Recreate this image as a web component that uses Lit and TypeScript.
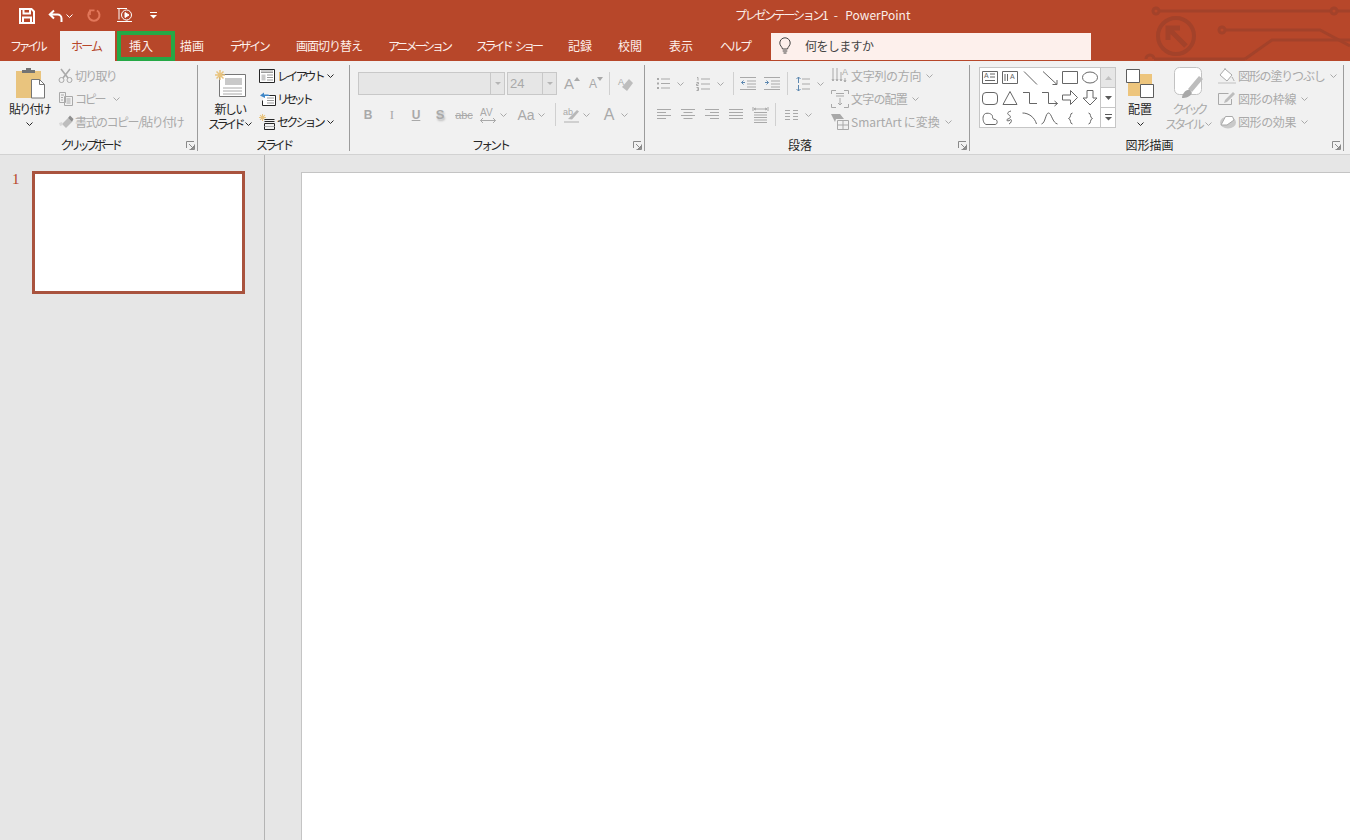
import { css, html, svg, LitElement } from "lit";
import { customElement } from "lit/decorators.js";

const icon = (w: number, h: number, body: unknown) =>
  html`<svg width=${w} height=${h} viewBox="0 0 ${w} ${h}">${body}</svg>`;

// letter-spacing squeezes the full-width kana to the narrow Meiryo UI widths
const tx = (text: string, ls = 0) =>
  html`<span class="tx" style="letter-spacing:${ls}px">${text}</span>`;

const chev = icon(7, 4, svg`<path d="M.5.5l3 3 3-3"/>`);
const launcher = html`<span class="launch">${icon(9, 9, svg`
  <path d="M.5 7V.5H8M8.5 3.500v5H3.500M3 3l4.500 4.500M7.500 5v2.500H5"/>`)}</span>`;
const sep = html`<i class="sep"></i>`;

const TABS: [string, number, number][] = [
  ["描画", 24, 0],
  ["デザイン", 40, -2.4],
  ["画面切り替え", 66, -1],
  ["アニメーション", 62, -3.1],
  ["スライド ショー", 66, -3.4],
  ["記録", 24, 0],
  ["校閲", 25, 0],
  ["表示", 25, 0],
  ["ヘルプ", 30, -2],
];

const I = {
  save: icon(16, 16, svg`<g stroke-width="2"><path d="M1 1h11.500L15 3.500V15H1z"/><path d="M4.500 1v4.500h6.500V1M4 15V9.500h8V15"/></g>`),
  undo: icon(15, 14, svg`<g stroke-width="2"><path d="M6 1.500L1.800 5.500 6 9.500M2 5.500h7.500a4 4 0 0 1 4 4V13"/></g>`),
  redo: icon(14, 15, svg`<g stroke-width="2"><path d="M10 2.500a5.600 5.600 0 1 1-6.500.2"/><path d="M3 7V2.400H7.500" stroke-width="1.600"/></g>`),
  show: icon(17, 17, svg`<path d="M1 1.500h10M3 1.500v11M1 14.500h15M10 14.500l1-1"/><circle cx="10.500" cy="8" r="5"/><path d="M9 5.500l4 2.500-4 2.500z" fill="currentColor"/>`),
  more: icon(7, 7, svg`<path d="M0 .5h7"/><path d="M0 3h7L3.500 6.500z" fill="currentColor" stroke="none"/>`),
  bulb: icon(12, 16, svg`<path d="M3.500 11C3 8.500.8 7.800.8 5a5.200 5.200 0 0 1 10.400 0c0 2.800-2.200 3.500-2.700 6zM3.700 13h4.600M4.500 15h3"/>`),
  paste: icon(30, 31, svg`
    <path d="M1 3h25v27H1z" fill="#e9c47e" stroke="none"/>
    <path d="M7 4V2h4V0h5v2h4v3H7z" fill="#737373" stroke="none"/>
    <path d="M16.500 11.500h8l5 5v13.500h-13z" fill="#fff" stroke="#757575"/>
    <path d="M24.500 11.500v5h5" stroke="#757575"/>`),
  cut: icon(16, 16, svg`<circle cx="3.500" cy="12" r="2.500"/><circle cx="11.500" cy="12" r="2.500"/><path d="M3 1l7 9M12 1L5 10" stroke-width="1.600"/>`),
  copy: icon(16, 15, svg`<path d="M1.500 1.500h6v10h-6zM6.500 5.500h8v9h-8zM3 4h3M3 6.500h2M3 9h2M8.500 8h4M8.500 10h4M8.500 12h4"/>`),
  brush: icon(17, 14, svg`<path d="M4 9l6-6 4 4-6 6z" fill="#bdbdbd" stroke="none"/><path d="M10 3l2-2.500 3.500 3.500L14 7z" fill="#8f8f8f" stroke="none"/><path d="M1 8l3-1 1 3-3 1z" fill="#d9d9d9" stroke="none"/>`),
  layout: icon(16, 14, svg`<path d="M.5.5h15v13H.5z" fill="#fff"/><path d="M2 2h12M2 3.500h12" stroke="#9a9a9a"/><path d="M2.500 5.500h4v6h-4z" fill="#c9c9c9" stroke="none"/><path d="M8 6h6M8 8.500h6M8 11h6" stroke="#9a9a9a"/>`),
  reset: icon(17, 14, svg`<path d="M5.500 3.500h11v10h-13v-5" fill="#fff"/><path d="M8 6h7M8 8.500h7M8 11h7" stroke="#9a9a9a"/><path d="M1 3.500L5 .5v2h4a3 3 0 0 1 2 1.500H6v2z" fill="#3f87c8" stroke="none"/>`),
  section: icon(16, 16, svg`<g transform="scale(.7)">${svg`<path d="M5 0v10M0 5h10M1.500 1.500l7 7M8.500 1.500l-7 7" stroke="#e9c47e" stroke-width="1.500"/>`}</g><path d="M5.500 5.500h10M5.500 7.500h10M5.500 9.500h10v6h-10z" fill="none"/><path d="M5.500 12.500h10" stroke="#b0b0b0"/>`),
  newSlide: icon(31, 27, svg`
    <path d="M4.500 4.500h26v22h-26z" fill="#fff" stroke="#777"/>
    <path d="M10 8h17v7H10z" fill="#c9c9c9" stroke="none"/>
    <path d="M8 18h19M8 21h19M8 24h19" stroke="#a8a8a8"/>
    <path d="M5 0v10M0 5h10M1.500 1.500l7 7M8.500 1.500l-7 7" stroke="#e9c47e" stroke-width="1.500"/>`),
  grow: html`<span class="g up-a">A</span>${icon(6, 4, svg`<path d="M0 4l3-4 3 4z" fill="currentColor" stroke="none"/>`)}`,
  shrink: html`<span class="g down-a">A</span>${icon(6, 4, svg`<path d="M0 0h6L3 4z" fill="currentColor" stroke="none"/>`)}`,
  eraser: icon(16, 16, svg`<text x="0" y="9" class="glyph" font-size="9">A</text><path d="M4 11l7-8 4 4-6 8z" fill="#bdbdbd" stroke="none"/>`),
  b: html`<b class="g" >B</b>`,
  i: html`<i class="g serif">I</i>`,
  u: html`<b class="g under">U</b>`,
  s: html`<b class="g shadow">S</b>`,
  abc: html`<span class="g strike">abc</span>`,
  av: icon(16, 16, svg`<text x="0" y="9" class="glyph" font-size="10">AV</text><path d="M.5 13.500h15M3 11l-2.500 2.500L3 16M13 11l2.500 2.500L13 16"/>`),
  aa: html`<span class="g big">Aa</span>`,
  hl: icon(17, 16, svg`<text x="0" y="8" class="glyph" font-size="9">ab</text><path d="M5 12L14 3l2 1.500-7 8z" fill="#b8b8b8" stroke="none"/><path d="M1 15h15" stroke="#d0d0d0" stroke-width="2"/>`),
  color: html`<span class="g huge">A</span>`,
  bullets: icon(13, 13, svg`<path d="M4 2h9M4 6.500h9M4 11h9"/><path d="M0 1h2v2H0zM0 5.500h2v2H0zM0 10h2v2H0z" fill="currentColor" stroke="none"/>`),
  numbers: icon(14, 14, svg`<path d="M5 2h9M5 7h9M5 12h9"/><path d="M1 .5h1v3M.5 5.500h2v1.500h-2v1.500h2M.5 10.500h2v3h-2M1 12h1.500"/>`),
  outdent: icon(16, 13, svg`<path d="M0 .5h16M7 4h9M7 7h9M7 10h9M0 12.500h16"/><path d="M5 5.500H1.500M3.500 3.500l-2 2 2 2" stroke="#5d88b0"/>`),
  indent: icon(16, 13, svg`<path d="M0 .5h16M7 4h9M7 7h9M7 10h9M0 12.500h16"/><path d="M1 5.500h3.500M2.500 3.500l2 2-2 2" stroke="#5d88b0"/>`),
  spacing: icon(14, 16, svg`<path d="M6 3h8M6 8h8M6 13h8"/><path d="M2.500 1v6M.5 3l2-2 2 2M2.500 9v6M.5 13l2 2 2-2" stroke="#5d88b0"/>`),
  left: icon(14, 11, svg`<path d="M0 .5h14M0 3.500h9M0 6.500h14M0 9.500h9"/>`),
  center: icon(14, 11, svg`<path d="M0 .5h14M2.500 3.500h9M0 6.500h14M2.500 9.500h9"/>`),
  right: icon(14, 11, svg`<path d="M0 .5h14M5 3.500h9M0 6.500h14M5 9.500h9"/>`),
  justify: icon(14, 11, svg`<path d="M0 .5h14M0 3.500h14M0 6.500h14M0 9.500h14"/>`),
  distrib: icon(15, 16, svg`<path d="M0 0v4M15 0v4M1 2h13M3 1L1 2l2 1M12 1l2 1-2 1M1 5.500h13M1 8h13M1 10.500h13M1 13h13M1 15.500h13" stroke-width="1"/>`),
  cols: icon(13, 10, svg`<path d="M0 .5h5M8 .5h5M0 3.500h5M8 3.500h5M0 6.500h5M8 6.500h5M0 9.500h5M8 9.500h5"/>`),
  direction: icon(18, 18, svg`<path d="M2 1v13M6 1v13M10 5v9M1 12l1 2 1-2M5 12l1 2 1-2M9 12l1 2 1-2"/><text x="11" y="8" class="glyph" font-size="9">A</text><path d="M14 11v4M13 13l1 2 1-2"/>`),
  align: icon(18, 18, svg`<path d="M.5 4V.5H5M13 .5h4.500V4M.5 14v3.500H5M13 17.500h4.500V14" /><path d="M5 3.500h8M5 6h8M9 8v7M7 13l2 2 2-2"/>`),
  smart: icon(19, 18, svg`<path d="M0 1h9l4 5H5l-1 3z" fill="#a8a8a8" stroke="none"/><path d="M6.500 7.500h11v9h-11zM12 8v8M7 12h10"/>`),
  arrange: icon(28, 29, svg`
    <path d="M11 5h15v14H11zM2 13h15v14H2z" fill="#edc57d" stroke="none"/>
    <path d="M.5.500h13v13H.5zM14.500 15.500h13v13h-13z" fill="#fff" stroke="#5c5c5c"/>`),
  quick: icon(30, 32, svg`
    <rect x=".5" y=".5" width="27" height="27" rx="5" fill="#fff" stroke="#c2c2c2"/>
    <path d="M14 22L25 9l4 3-11 13z" fill="#bdbdbd" stroke="none"/>
    <path d="M8 31c0-4 4-9 8-8l2 3c-2 4-6 5-10 5z" fill="#a8a8a8" stroke="none"/>`),
  fill: icon(18, 16, svg`<path d="M7 1l7 6-5 6-7-6z" fill="#fff"/><path d="M7 1V0M14 9c1 2 2 3 2 4" /><path d="M0 15h18" stroke="#d9d9d9" stroke-width="2"/>`),
  outline: icon(18, 16, svg`<path d="M.5 2.500h10M.5 2.500v11h13V8"/><path d="M7 9l8-8 2 2-8 8-3 1z" fill="#bdbdbd" stroke="none"/>`),
  effect: icon(18, 15, svg`<ellipse cx="10" cy="8.500" rx="8" ry="6" fill="#c9c9c9" stroke="none"/><path d="M3 11L7.500 2.500h7L16 6 9 11z" fill="#fff"/>`),
};

const SHAPES = [
  svg`<path d="M2.500 3.500h15v12h-15z"/><text x="4" y="10" class="glyph" font-size="7">A</text><path d="M10 6h5M10 9h5M5 12.500h10"/>`,
  svg`<path d="M2.500 3.500h15v12h-15zM5 6v7M7.500 6v7"/><text x="10" y="11" class="glyph" font-size="7">A</text>`,
  svg`<path d="M4 3.500l13 13"/>`,
  svg`<path d="M3 3.500l14 13M17 12v4.500h-4.500"/>`,
  svg`<path d="M2.500 3.500h15v12h-15z"/>`,
  svg`<ellipse cx="10" cy="9.500" rx="7.500" ry="5.500"/>`,
  svg`<rect x="2.500" y="4.500" width="15" height="12" rx="3.500"/>`,
  svg`<path d="M10 3.500l7 13H3z"/>`,
  svg`<path d="M3 4.500h6.500v11H17"/>`,
  svg`<path d="M2 4.500h6.500v11h9M14.500 13l3 2.500-3 2.500"/>`,
  svg`<path d="M2.500 7h8V2.500l7 7-7 7V12h-8z"/>`,
  svg`<path d="M7 2.500h6V10h4l-7 7-7-7h4z"/>`,
  svg`<path d="M6 16.500H15c2.500 0 3-4 .5-5-2.500 0-3-1-3-3s-3-4-7-3c-2 1-2.500 3-2.500 5s1 6 3.500 6z"/>`,
  svg`<path d="M11 3c-4 1-4 3-2 4s2 3-1 4 0 3 2 1 2 3-1 4"/>`,
  svg`<path d="M2.500 5c6 0 12 4 14 11"/>`,
  svg`<path d="M1.500 16c4-1 4-11 7-11s4 10 9 11"/>`,
  svg`<path d="M12.500 5c-3 0-1 5-4 5.500 3 .5 1 5.500 4 5.500"/>`,
  svg`<path d="M8.500 5c3 0 1 5 4 5.500-3 .5-1 5.500-4 5.500"/>`,
];

@customElement("app-root")
export class AppRoot extends LitElement {
  static override styles = css`
    :host {
      display: flex;
      flex-direction: column;
      position: relative;
      height: 840px;
      overflow: hidden;
      font: 12px/14px "Noto Sans CJK JP", "Liberation Sans", sans-serif;
      color: #262626;
      background: #e6e6e6;
    }
    svg {
      display: block;
      flex: none;
      fill: none;
      stroke: currentColor;
      stroke-width: 1;
      overflow: visible;
    }
    .glyph {
      fill: currentColor;
      stroke: none;
      font-family: "Liberation Sans", sans-serif;
    }
    .tx {
      white-space: nowrap;
    }

    .title {
      flex: none;
      height: 31px;
      background: #b7472a;
      color: #fff;
      display: flex;
      align-items: center;
    }
    .qat {
      display: flex;
      align-items: center;
      width: 735px;
      height: 28px;
      padding-left: 19px;
      box-sizing: border-box;
    }
    .qat .undo { margin-left: 13px; }
    .qat .ch { margin: 0 0 0 3px; }
    .qat .redo { margin-left: 14px; color: #e2775a; }
    .qat .show { margin-left: 15px; }
    .qat .more { margin-left: 17px; }
    .doc-title {
      color: #fbeee9;
      padding-bottom: 2px;
      white-space: nowrap;
      word-spacing: 1px;
    }

    .circuit {
      position: absolute;
      top: 0;
      right: 0;
      overflow: hidden;
      stroke: #a3422a;
      stroke-width: 3;
    }

    .tabs {
      flex: none;
      height: 30px;
      background: #b7472a;
      color: #fdf0ec;
      display: flex;
      align-items: center;
    }
    .tab {
      height: 100%;
      box-sizing: border-box;
      display: flex;
      align-items: center;
    }
    .file { padding: 0 15px 0 10px; width: 60px; }
    .home {
      width: 55px;
      padding-left: 11px;
      background: #f1f1f1;
      color: #b7472a;
    }
    .insert {
      width: 58px;
      margin-left: 2px;
      padding-left: 8px;
      border: 4px solid #25a846;
    }
    .plain {
      display: flex;
      gap: 26px;
      margin-left: 5px;
    }
    .plain > span {
      display: block;
      white-space: nowrap;
      word-spacing: 5px;
    }
    .search {
      margin-left: 21px;
      width: 320px;
      height: 27px;
      background: #fdf0ec;
      color: #444;
      display: flex;
      align-items: center;
      gap: 14px;
      padding-left: 8px;
      box-sizing: border-box;
    }

    .ribbon {
      flex: none;
      height: 94px;
      box-sizing: border-box;
      padding-top: 4px;
      background: #f1f1f1;
      border-bottom: 1px solid #d2d2d2;
      display: flex;
    }
    .group {
      height: 86px;
      flex: none;
      box-sizing: border-box;
      border-right: 1px solid #9c9c9c;
      display: flex;
      flex-direction: column;
    }
    .g-clip { width: 198px; }
    .g-slide { width: 152px; }
    .g-font { width: 295px; }
    .g-para { width: 325px; }
    .g-draw { width: 374px; }
    .body {
      height: 72px;
      flex: none;
      display: flex;
    }
    .foot {
      height: 14px;
      flex: none;
      margin-top: 1px;
      display: flex;
      align-items: center;
    }
    .foot .name {
      flex: 1;
      text-align: center;
    }
    .launch {
      width: 14px;
      box-sizing: border-box;
      padding-left: 3px;
      color: #8a8a8a;
    }
    .g-clip .name {
      padding-right: 3px;
    }

    .off {
      color: #a9a9a9;
    }
    .col {
      display: flex;
      flex-direction: column;
      align-items: center;
    }
    .col .pic {
      height: 36px;
      display: flex;
      align-items: center;
      justify-content: center;
    }
    .col .line {
      height: 15px;
      display: flex;
      align-items: center;
      gap: 3px;
    }
    .rows {
      display: flex;
      flex-direction: column;
      margin-top: -1px;
    }
    .row {
      height: 23px;
      display: flex;
      align-items: center;
      gap: 2px;
    }
    .row .ch {
      margin-left: 3px;
    }
    .g-clip .row {
      gap: 0;
    }
    .g-clip .row .ch {
      margin-left: 9px;
    }
    .g-slide .row {
      gap: 1px;
    }
    .ico {
      width: 18px;
      display: flex;
      justify-content: center;
    }

    .paste { width: 57px; padding-left: 2px; box-sizing: border-box; }
    .new { width: 60px; padding-left: 4px; box-sizing: border-box; }

    .stack {
      padding-top: 7px;
      display: flex;
      flex-direction: column;
      gap: 8px;
    }
    .tools {
      height: 23px;
      display: flex;
      align-items: center;
      flex: none;
    }
    .b {
      width: 24px;
      height: 23px;
      display: flex;
      align-items: center;
      justify-content: center;
      flex: none;
    }
    .b .up-a, .b .down-a {
      line-height: 18px;
    }
    .b .up-a { font-size: 15px; }
    .b .down-a { font-size: 12px; }
    .b .up-a + svg, .b .down-a + svg {
      margin-bottom: 10px;
    }
    .c {
      width: 14px;
      flex: none;
    }
    .c.w {
      width: 16px;
      padding-left: 2px;
      box-sizing: border-box;
    }
    .sep {
      width: 1px;
      height: 23px;
      margin: 0 3px;
      background: #d0d0d0;
      flex: none;
    }
    .sep.tight {
      margin: 0 2px;
    }
    .sep.flush {
      margin: 0 4px 0 1px;
    }
    .f-top { margin-left: 8px; }
    .f-bot { margin-left: 6px; }
    .p-top { margin-left: 6px; }
    .p-bot { margin-left: 7px; }
    .select {
      height: 23px;
      box-sizing: border-box;
      background: #e6e6e6;
      border: 1px solid #c8c8c8;
      display: flex;
      justify-content: flex-end;
      flex: none;
    }
    .s-font { width: 147px; }
    .s-size {
      width: 50px;
      margin-left: 2px;
      margin-right: 3px;
      justify-content: space-between;
      padding-left: 2px;
      font: 13px/21px "Liberation Sans", sans-serif;
    }
    .drop {
      width: 13px;
      border-left: 1px solid #c8c8c8;
      display: flex;
      align-items: center;
      justify-content: center;
      color: #b5b5b5;
    }
    .drop::after {
      content: "";
      border: 3px solid transparent;
      border-top-color: currentColor;
      margin-top: 3px;
    }
    .g {
      font: 12px/16px "Liberation Sans", sans-serif;
    }
    b.g { font-weight: 700; }
    .serif { font-family: "Liberation Serif", serif; font-size: 13px; }
    .under { text-decoration: underline; }
    .shadow { font-size: 13px; text-shadow: 1px 2px 2px #bbb; }
    .strike { text-decoration: line-through; font-size: 11px; }
    .big { font-size: 14px; }
    .huge { font-size: 16px; }

    .p-left {
      flex: 0 0 186px;
    }

    .gallery {
      width: 137px;
      height: 61px;
      margin: 2px 0 0 9px;
      box-sizing: border-box;
      background: #fff;
      border: 1px solid #c6c6c6;
      display: flex;
      color: #666;
      flex: none;
    }
    .shapes {
      flex: 1;
      display: grid;
      grid-template-columns: repeat(6, 20px);
      grid-auto-rows: 20px;
    }
    .scroll {
      width: 14px;
      border-left: 1px solid #c6c6c6;
      display: flex;
      flex-direction: column;
    }
    .scroll span {
      flex: 1;
      display: flex;
      align-items: center;
      justify-content: center;
      color: #5a5a5a;
    }
    .scroll span + span {
      border-top: 1px solid #c6c6c6;
    }
    .scroll .up {
      background: #e6e6e6;
      color: #c0c0c0;
    }
    .arrange { width: 44px; margin-left: 2px; }
    .quick { width: 51px; margin-left: 1px; }
    .d-rows { margin-left: 4px; }

    .work {
      flex: 1;
      display: flex;
      min-height: 0;
    }
    .side {
      width: 265px;
      box-sizing: border-box;
      border-right: 1px solid #b4b4b4;
      padding: 16px 0 0 12px;
      display: flex;
      flex: none;
    }
    .num {
      width: 20px;
      color: #b7472a;
      font: 15px/16px "Liberation Serif", serif;
    }
    .thumb {
      width: 213px;
      height: 123px;
      box-sizing: border-box;
      background: #fff;
      border: 3px solid #a9533e;
    }
    .stage {
      flex: 1;
      padding: 17px 0 0 36px;
    }
    .slide {
      height: 100%;
      box-sizing: border-box;
      background: #fff;
      border: solid #c4c4c4;
      border-width: 1px 0 0 1px;
    }
  `;

  private _titleBar() {
    return html`
      <div class="title">
        <div class="qat">
          ${I.save}
          <span class="undo">${I.undo}</span>
          <span class="ch">${chev}</span>
          <span class="redo">${I.redo}</span>
          <span class="show">${I.show}</span>
          <span class="more">${I.more}</span>
        </div>
        <span class="doc-title">${tx("プレゼンテーション1", -2.3)}&nbsp; -&nbsp; PowerPoint</span>
      </div>
      <svg class="circuit" width="210" height="61" viewBox="0 0 210 61">
        <circle cx="16" cy="11" r="3"/><path d="M19 11H192M198 11H210"/><circle cx="194" cy="11" r="3"/>
        <circle cx="36" cy="36" r="18" stroke-width="4"/>
        <path d="M28 28L46 46M28 40V28H40" stroke-width="5"/>
        <circle cx="82" cy="30" r="3"/><path d="M85 30H180L210 46"/>
        <path d="M105 59L132 40H200L210 40"/>
        <path d="M6 59a4 4 0 0 1 8 0M14 59H105"/>
      </svg>
    `;
  }

  private _tabs() {
    return html`
      <div class="tabs">
        <div class="tab file">${tx("ファイル", -3.4)}</div>
        <div class="tab home">${tx("ホーム", -1.8)}</div>
        <div class="tab insert">挿入</div>
        <div class="plain">
          ${TABS.map(([t, w, ls]) => html`<span style="width:${w}px;letter-spacing:${ls}px">${t}</span>`)}
        </div>
        <div class="search">${I.bulb}${tx("何をしますか", -.6)}</div>
      </div>
    `;
  }

  private _clipboard() {
    return html`
      <div class="group g-clip">
        <div class="body">
          <div class="col paste">
            <div class="pic">${I.paste}</div>
            <div class="line">${tx("貼り付け", -1.7)}</div>
            <div class="line">${chev}</div>
          </div>
          <div class="rows off">
            <div class="row"><span class="ico">${I.cut}</span>${tx("切り取り", -1.75)}</div>
            <div class="row"><span class="ico">${I.copy}</span>${tx("コピー", -2.3)}<span class="ch">${chev}</span></div>
            <div class="row"><span class="ico">${I.brush}</span>${tx("書式のコピー/貼り付け", -1.5)}</div>
          </div>
        </div>
        <div class="foot"><span class="name">${tx("クリップボード", -3.6)}</span>${launcher}</div>
      </div>
    `;
  }

  private _slides() {
    return html`
      <div class="group g-slide">
        <div class="body">
          <div class="col new">
            <div class="pic">${I.newSlide}</div>
            <div class="line">${tx("新しい", -1.7)}</div>
            <div class="line">${tx("スライド", -3.5)}${chev}</div>
          </div>
          <div class="rows">
            <div class="row"><span class="ico">${I.layout}</span>${tx("レイアウト", -2.8)}<span class="ch">${chev}</span></div>
            <div class="row"><span class="ico">${I.reset}</span>${tx("リセット", -3.75)}</div>
            <div class="row"><span class="ico">${I.section}</span>${tx("セクション", -2.8)}<span class="ch">${chev}</span></div>
          </div>
        </div>
        <div class="foot"><span class="name">${tx("スライド", -3.2)}</span></div>
      </div>
    `;
  }

  private _font() {
    return html`
      <div class="group g-font">
        <div class="body">
          <div class="stack off">
            <div class="tools f-top">
              <div class="select s-font"><span class="drop"></span></div>
              <div class="select s-size"><span>24</span><span class="drop"></span></div>
              <span class="b">${I.grow}</span><span class="b">${I.shrink}</span>
              <i class="sep flush"></i>
              <span class="b">${I.eraser}</span>
            </div>
            <div class="tools f-bot">
              <span class="b">${I.b}</span><span class="b">${I.i}</span><span class="b">${I.u}</span>
              <span class="b">${I.s}</span><span class="b">${I.abc}</span>
              <span class="b">${I.av}</span><span class="c">${chev}</span>
              <span class="b">${I.aa}</span><span class="c">${chev}</span>
              ${sep}
              <span class="b">${I.hl}</span><span class="c">${chev}</span>
              <span class="b">${I.color}</span><span class="c">${chev}</span>
            </div>
          </div>
        </div>
        <div class="foot"><span class="name">${tx("フォント", -3)}</span>${launcher}</div>
      </div>
    `;
  }

  private _paragraph() {
    return html`
      <div class="group g-para">
        <div class="body off">
          <div class="stack p-left">
            <div class="tools p-top">
              <span class="b">${I.bullets}</span><span class="c w">${chev}</span>
              <span class="b">${I.numbers}</span><span class="c w">${chev}</span>
              <i class="sep tight"></i>
              <span class="b">${I.outdent}</span><span class="b">${I.indent}</span>
              ${sep}
              <span class="b">${I.spacing}</span><span class="c w">${chev}</span>
            </div>
            <div class="tools p-bot">
              <span class="b">${I.left}</span><span class="b">${I.center}</span><span class="b">${I.right}</span>
              <span class="b">${I.justify}</span><span class="b">${I.distrib}</span>
              ${sep}
              <span class="b">${I.cols}</span><span class="c w">${chev}</span>
            </div>
          </div>
          <div class="rows">
            <div class="row"><span class="ico">${I.direction}</span>${tx("文字列の方向", -.3)}<span class="ch">${chev}</span></div>
            <div class="row"><span class="ico">${I.align}</span>${tx("文字の配置", -.8)}<span class="ch">${chev}</span></div>
            <div class="row"><span class="ico">${I.smart}</span>SmartArt ${tx("に変換")}<span class="ch">${chev}</span></div>
          </div>
        </div>
        <div class="foot"><span class="name">段落</span>${launcher}</div>
      </div>
    `;
  }

  private _drawing() {
    return html`
      <div class="group g-draw">
        <div class="body">
          <div class="gallery">
            <div class="shapes">
              ${SHAPES.map((s) => icon(20, 20, s))}
            </div>
            <div class="scroll">
              <span class="up">${icon(7, 4, svg`<path d="M0 4h7L3.500 0z" fill="currentColor" stroke="none"/>`)}</span>
              <span>${icon(7, 4, svg`<path d="M0 0h7L3.500 4z" fill="currentColor" stroke="none"/>`)}</span>
              <span>${I.more}</span>
            </div>
          </div>
          <div class="col arrange">
            <div class="pic">${I.arrange}</div>
            <div class="line">${tx("配置")}</div>
            <div class="line">${chev}</div>
          </div>
          <div class="col quick off">
            <div class="pic">${I.quick}</div>
            <div class="line">${tx("クイック", -4)}</div>
            <div class="line">${tx("スタイル", -2.8)}${chev}</div>
          </div>
          <div class="rows off d-rows">
            <div class="row"><span class="ico">${I.fill}</span>${tx("図形の塗りつぶし", -1.2)}<span class="ch">${chev}</span></div>
            <div class="row"><span class="ico">${I.outline}</span>${tx("図形の枠線", -.4)}<span class="ch">${chev}</span></div>
            <div class="row"><span class="ico">${I.effect}</span>${tx("図形の効果", -.4)}<span class="ch">${chev}</span></div>
          </div>
        </div>
        <div class="foot"><span class="name">${tx("図形描画")}</span>${launcher}</div>
      </div>
    `;
  }

  override render() {
    return html`
      ${this._titleBar()}
      ${this._tabs()}
      <div class="ribbon">
        ${this._clipboard()}
        ${this._slides()}
        ${this._font()}
        ${this._paragraph()}
        ${this._drawing()}
      </div>
      <div class="work">
        <div class="side">
          <span class="num">1</span>
          <div class="thumb"></div>
        </div>
        <div class="stage"><div class="slide"></div></div>
      </div>
    `;
  }
}
